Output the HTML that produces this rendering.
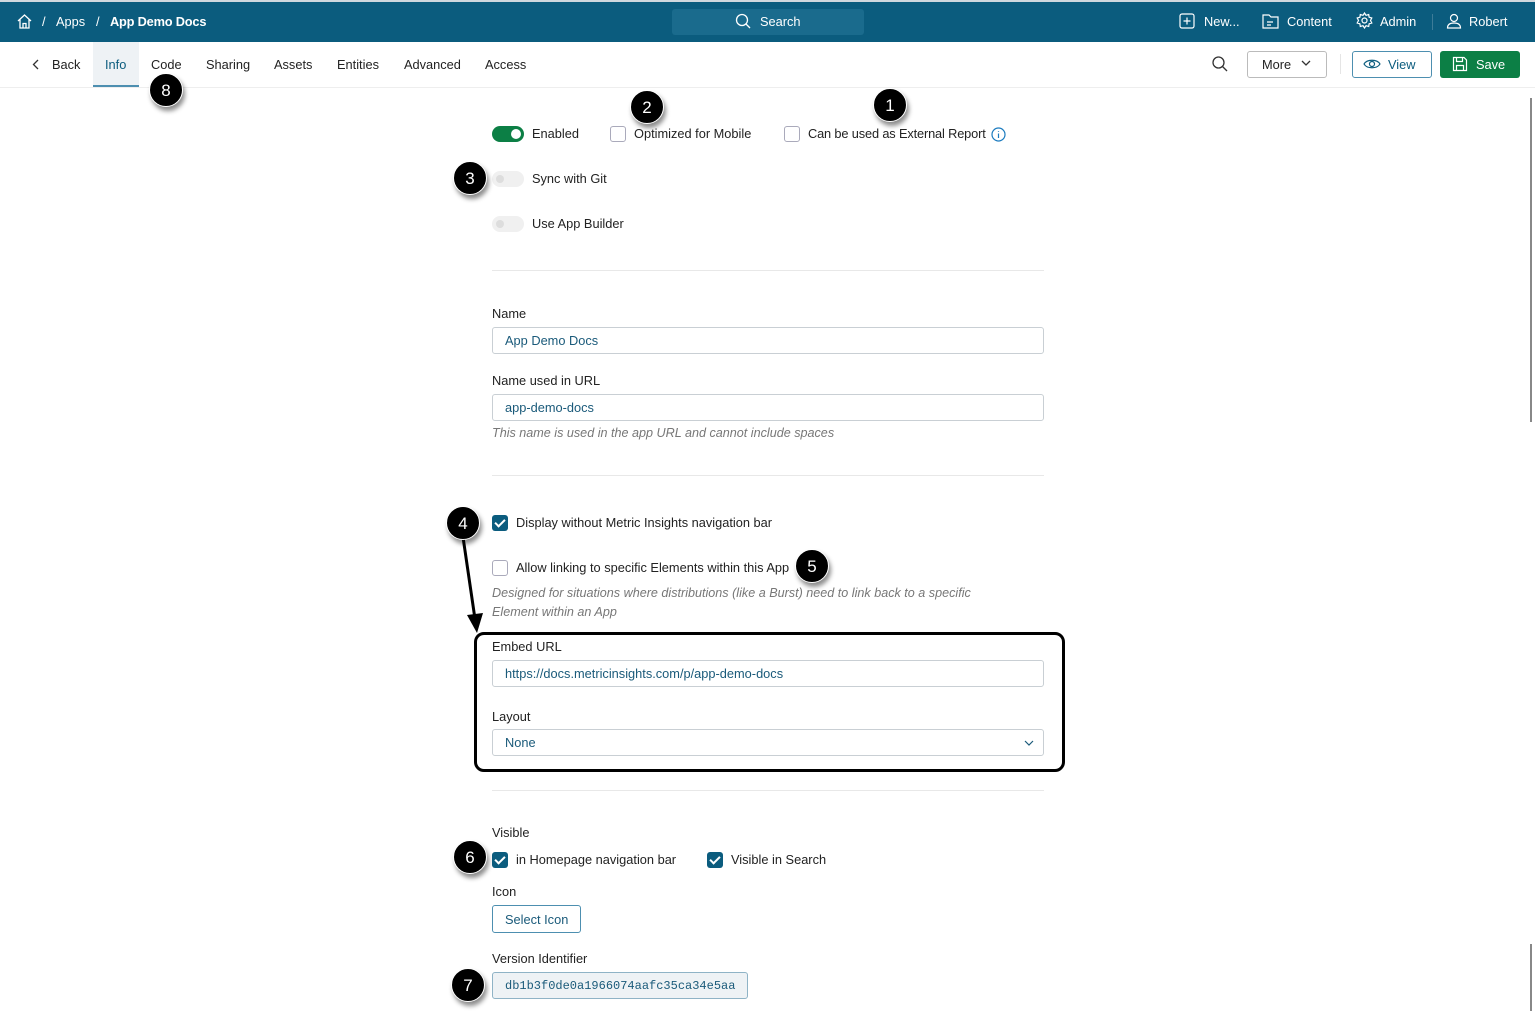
<!DOCTYPE html>
<html><head><meta charset="utf-8"><style>
*{box-sizing:border-box;margin:0;padding:0}
body{width:1535px;height:1011px;overflow:hidden;background:#fff;font-family:"Liberation Sans",sans-serif;font-size:12.8px;color:#222;position:relative}
.a{position:absolute;white-space:nowrap}
.hdr{position:absolute;left:0;top:0;width:1535px;height:42px;background:#0b5c7e;border-top:2px solid #d0d8de;color:#fff}
.tabs{position:absolute;left:0;top:42px;width:1535px;height:46px;border-bottom:1px solid #eee;background:#fff}
.inp{position:absolute;left:492px;width:552px;height:27px;border:1px solid #c9cfd4;border-radius:3px;color:#1a5a7a;padding:5px 12px;font-size:12.8px}
.lbl{position:absolute;left:492px;color:#222}
.cb{position:absolute;width:16px;height:16px;border:1px solid #aab;border-radius:3px;background:#fff}
.cbc{position:absolute;width:16px;height:16px;border-radius:3px;background:#0b5c7e}
.cbc:after{content:"";position:absolute;left:5px;top:2px;width:4px;height:8px;border:solid #fff;border-width:0 2px 2px 0;transform:rotate(45deg)}
.hr{position:absolute;left:492px;width:552px;height:1px;background:#e8e8e8}
.c{position:absolute;width:34px;height:34px;border-radius:50%;background:#000;color:#fff;font-size:17px;text-align:center;line-height:34px;box-shadow:2px 4px 5px rgba(0,0,0,.45);border:1px solid #fff}
.help{position:absolute;left:492px;font-style:italic;color:#777;font-size:12.6px;line-height:19px}
.tog{position:absolute;width:32px;height:16px;border-radius:8px;background:#f0f0f0}
.tog:after{content:"";position:absolute;left:4px;top:4px;width:8px;height:8px;border-radius:50%;background:#ddd}
</style></head><body>
<div class="hdr">
<svg class="a" style="left:16px;top:11px" width="17" height="17" viewBox="0 0 17 17" fill="none" stroke="#fff" stroke-width="1.3"><path d="M2 8L8.5 2L15 8M4 6.5V15H13V6.5M7 15V10.5H10V15"/></svg>
<span class="a" style="left:42px;top:12px">/</span>
<span class="a" style="left:56px;top:12px">Apps</span>
<span class="a" style="left:96px;top:12px">/</span>
<span class="a" style="left:110px;top:12px;font-weight:bold;letter-spacing:-0.2px">App Demo Docs</span>
<div class="a" style="left:672px;top:7px;width:192px;height:26px;background:#1a6b8d;border-radius:3px"></div>
<svg class="a" style="left:735px;top:11px" width="17" height="17" viewBox="0 0 17 17" fill="none" stroke="#fff" stroke-width="1.3"><circle cx="7" cy="7" r="5.5"/><path d="M11 11L15 15"/></svg>
<span class="a" style="left:760px;top:12px">Search</span>
<svg class="a" style="left:1179px;top:11px" width="16" height="16" viewBox="0 0 16 16" fill="none" stroke="#fff" stroke-width="1.2"><rect x="1" y="1" width="14" height="14" rx="2"/><path d="M8 4.5V11.5M4.5 8H11.5"/></svg>
<span class="a" style="left:1204px;top:12px">New...</span>
<svg class="a" style="left:1262px;top:11px" width="17" height="16" viewBox="0 0 17 16" fill="none" stroke="#fff" stroke-width="1.2"><path d="M1 2H7L9 4H16V15H1Z M5 9H11M5 12H9"/></svg>
<span class="a" style="left:1287px;top:12px">Content</span>
<svg class="a" style="left:1356px;top:10px" width="17" height="17" viewBox="0 0 17 17" fill="none" stroke="#fff" stroke-width="1.2"><circle cx="8.5" cy="8.5" r="2.5"/><path d="M8.5 1L10 3.3L12.7 2.5L13.1 5.2L15.8 6L14.5 8.5L15.8 11L13.1 11.8L12.7 14.5L10 13.7L8.5 16L7 13.7L4.3 14.5L3.9 11.8L1.2 11L2.5 8.5L1.2 6L3.9 5.2L4.3 2.5L7 3.3Z"/></svg>
<span class="a" style="left:1380px;top:12px">Admin</span>
<div class="a" style="left:1432px;top:12px;width:1px;height:16px;background:#3d7c98"></div>
<svg class="a" style="left:1446px;top:11px" width="16" height="16" viewBox="0 0 16 16" fill="none" stroke="#fff" stroke-width="1.2"><circle cx="8" cy="5" r="3.5"/><path d="M1.5 15C1.5 11 4.5 10 8 10S14.5 11 14.5 15Z"/></svg>
<span class="a" style="left:1469px;top:12px">Robert</span>
</div>
<div class="tabs">
<svg class="a" style="left:32px;top:17px" width="7" height="11" viewBox="0 0 7 11" fill="none" stroke="#333" stroke-width="1.3"><path d="M6 1L1.5 5.5L6 10"/></svg>
<span class="a" style="left:52px;top:15px">Back</span>
<div class="a" style="left:93px;top:0;width:46px;height:45px;background:#eef2f5;border-bottom:2px solid #4d8fb0"></div>
<span class="a" style="left:105px;top:15px;color:#0b5c7e">Info</span>
<span class="a" style="left:151px;top:15px">Code</span>
<span class="a" style="left:206px;top:15px">Sharing</span>
<span class="a" style="left:274px;top:15px">Assets</span>
<span class="a" style="left:337px;top:15px">Entities</span>
<span class="a" style="left:404px;top:15px">Advanced</span>
<span class="a" style="left:485px;top:15px">Access</span>
<svg class="a" style="left:1211px;top:13px" width="18" height="18" viewBox="0 0 18 18" fill="none" stroke="#333" stroke-width="1.3"><circle cx="7.5" cy="7.5" r="5.5"/><path d="M11.5 11.5L16 16"/></svg>
<div class="a" style="left:1247px;top:9px;width:80px;height:27px;border:1px solid #bbb;border-radius:3px"></div>
<span class="a" style="left:1262px;top:15px">More</span>
<svg class="a" style="left:1301px;top:18px" width="10" height="7" viewBox="0 0 10 7" fill="none" stroke="#333" stroke-width="1.3"><path d="M1 1L5 5L9 1"/></svg>
<div class="a" style="left:1340px;top:12px;width:1px;height:20px;background:#e5e5e5"></div>
<div class="a" style="left:1352px;top:9px;width:80px;height:27px;border:1px solid #4d8fb0;border-radius:3px"></div>
<svg class="a" style="left:1363px;top:16px" width="18" height="12" viewBox="0 0 18 12" fill="none" stroke="#0b5c7e" stroke-width="1.2"><path d="M1 6C4 1 14 1 17 6C14 11 4 11 1 6Z"/><circle cx="9" cy="6" r="2.5"/></svg>
<span class="a" style="left:1388px;top:15px;color:#0b5c7e">View</span>
<div class="a" style="left:1440px;top:9px;width:80px;height:27px;background:#0c7f45;border-radius:3px"></div>
<svg class="a" style="left:1452px;top:14px" width="16" height="16" viewBox="0 0 16 16" fill="none" stroke="#fff" stroke-width="1.2"><path d="M1.5 1.5H12L14.5 4V14.5H1.5Z M4.5 1.5V5.5H10.5V1.5 M4.5 14.5V9.5H11.5V14.5"/></svg>
<span class="a" style="left:1476px;top:15px;color:#fff">Save</span>
</div>
<div class="a" style="left:1530px;top:98px;width:2px;height:324px;background:#888"></div>
<div class="a" style="left:1530px;top:944px;width:2px;height:67px;background:#888"></div>

<div class="a" style="left:492px;top:126px;width:32px;height:16px;border-radius:8px;background:#0c7f45"></div>
<div class="a" style="left:511px;top:129px;width:10px;height:10px;border-radius:50%;background:#fff"></div>
<span class="a" style="left:532px;top:126px">Enabled</span>
<div class="cb" style="left:610px;top:126px"></div>
<span class="a" style="left:634px;top:126px">Optimized for Mobile</span>
<div class="cb" style="left:784px;top:126px"></div>
<span class="a" style="left:808px;top:126px;letter-spacing:-0.15px">Can be used as External Report</span>
<svg class="a" style="left:991px;top:127px" width="15" height="15" viewBox="0 0 15 15" fill="none" stroke="#1b7bbf" stroke-width="1.2"><circle cx="7.5" cy="7.5" r="6.5"/><path d="M7.5 6.5V11M7.5 4V4.8"/></svg>
<div class="tog" style="left:492px;top:171px"></div>
<span class="a" style="left:532px;top:171px">Sync with Git</span>
<div class="tog" style="left:492px;top:216px"></div>
<span class="a" style="left:532px;top:216px">Use App Builder</span>
<div class="hr" style="top:270px"></div>

<div class="lbl" style="top:306px">Name</div>
<div class="inp" style="top:327px">App Demo Docs</div>
<div class="lbl" style="top:373px">Name used in URL</div>
<div class="inp" style="top:394px">app-demo-docs</div>
<div class="help" style="top:424px">This name is used in the app URL and cannot include spaces</div>
<div class="hr" style="top:475px"></div>

<div class="cbc" style="left:492px;top:515px"></div>
<span class="a" style="left:516px;top:515px">Display without Metric Insights navigation bar</span>
<div class="cb" style="left:492px;top:560px"></div>
<span class="a" style="left:516px;top:560px">Allow linking to specific Elements within this App</span>
<div class="help" style="top:584px">Designed for situations where distributions (like a Burst) need to link back to a specific<br>Element within an App</div>
<div class="a" style="left:474px;top:632px;width:591px;height:140px;border:3px solid #000;border-radius:10px"></div>
<div class="lbl" style="top:639px">Embed URL</div>
<div class="inp" style="top:660px">https://docs.metricinsights.com/p/app-demo-docs</div>
<div class="lbl" style="top:709px">Layout</div>
<div class="inp" style="top:729px">None</div>
<svg class="a" style="left:1024px;top:740px" width="10" height="7" viewBox="0 0 10 7" fill="none" stroke="#1a5a7a" stroke-width="1.2"><path d="M1 1L5 5L9 1"/></svg>
<div class="hr" style="top:790px"></div>

<div class="lbl" style="top:825px">Visible</div>
<div class="cbc" style="left:492px;top:852px"></div>
<span class="a" style="left:516px;top:852px">in Homepage navigation bar</span>
<div class="cbc" style="left:707px;top:852px"></div>
<span class="a" style="left:731px;top:852px">Visible in Search</span>
<div class="lbl" style="top:884px">Icon</div>
<div class="a" style="left:492px;top:905px;width:89px;height:28px;border:1px solid #4d8fb0;border-radius:3px;color:#1a5a7a;padding:6px 12px">Select Icon</div>
<div class="lbl" style="top:951px">Version Identifier</div>
<div class="a" style="left:492px;top:972px;width:256px;height:27px;border:1px solid #8fb3c6;border-radius:3px;background:#eef2f5;color:#1a5a7a;padding:6px 12px;font-family:'Liberation Mono',monospace;font-size:12px">db1b3f0de0a1966074aafc35ca34e5aa</div>

<svg class="a" style="left:455px;top:535px" width="40" height="100" viewBox="0 0 40 100"><path d="M8 2L20 84" stroke="#000" stroke-width="3"/><path d="M12 80L22 98L28 78Z" fill="#000"/></svg>
<div class="c" style="left:873px;top:88px">1</div>
<div class="c" style="left:630px;top:90px">2</div>
<div class="c" style="left:453px;top:161px">3</div>
<div class="c" style="left:446px;top:506px">4</div>
<div class="c" style="left:795px;top:549px">5</div>
<div class="c" style="left:453px;top:840px">6</div>
<div class="c" style="left:451px;top:968px">7</div>
<div class="c" style="left:149px;top:73px">8</div>
</body></html>
